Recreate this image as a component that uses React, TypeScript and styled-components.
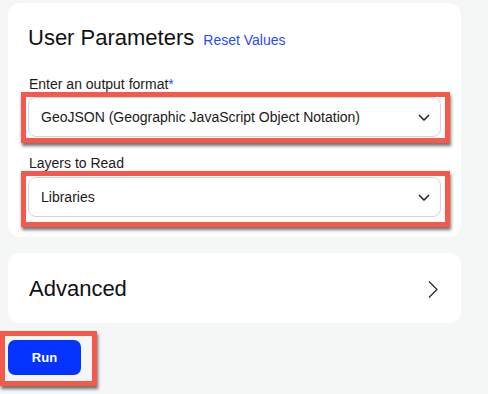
import React from 'react';
import styled, { createGlobalStyle } from 'styled-components';

const GlobalStyle = createGlobalStyle`
  html, body {
    margin: 0;
    padding: 0;
    background: #f4f7f5;
    font-family: 'Liberation Sans', Arial, sans-serif;
    color: #161616;
  }
`;

const Page = styled.div`
  display: flex;
  flex-direction: column;
  padding: 3px 27px 0 8px;
  min-height: 394px;
  box-sizing: border-box;
`;

const Card = styled.section`
  background: #ffffff;
  border-radius: 12px;
  padding: 22px 20px 10px 20px;
`;

const TitleRow = styled.div`
  display: flex;
  align-items: baseline;
  gap: 9px;
  height: 26px;
  line-height: 26px;
`;

const Title = styled.h2`
  margin: 0;
  font-size: 22px;
  font-weight: 400;
  color: #111;
`;

const ResetLink = styled.a`
  font-size: 14px;
  color: #1f4cff;
  text-decoration: none;
  cursor: pointer;
`;

const Label = styled.label<{ $top: number }>`
  display: block;
  margin-top: ${(p) => p.$top}px;
  font-size: 14px;
  line-height: 16px;
  height: 16px;
  padding-left: 1px;
  color: #1a1a1a;
`;

const Required = styled.span`
  color: #1f4cff;
`;

// red annotation frame drawn around the highlighted controls
const Highlight = styled.div<{ $pad: string; $margin: string }>`
  border: 5px solid #f4594b;
  padding: ${(p) => p.$pad};
  margin: ${(p) => p.$margin};
  box-shadow: 1px 3px 3px rgba(0, 0, 0, 0.55);
`;

const Select = styled.div`
  height: 40px;
  box-sizing: border-box;
  border: 1px solid #d3d6d4;
  border-radius: 8px;
  background: #fff;
  display: flex;
  align-items: center;
  justify-content: space-between;
  padding: 0 10px 0 12px;
  font-size: 14px;
  color: #1a1a1a;
`;

const AdvancedCard = styled.section`
  margin-top: 16px;
  height: 70px;
  background: #ffffff;
  border-radius: 12px;
  display: flex;
  align-items: center;
  justify-content: space-between;
  padding: 2px 23px 0 21px;
  box-sizing: border-box;
`;

const AdvancedTitle = styled.span`
  font-size: 22px;
  color: #111;
`;

const RunFrame = styled(Highlight)`
  align-self: flex-start;
`;

const RunButton = styled.button`
  display: block;
  width: 73px;
  height: 35px;
  border: none;
  border-radius: 7px;
  background: #0433ff;
  color: #fff;
  font-family: 'Liberation Sans', Arial, sans-serif;
  font-size: 13px;
  font-weight: 700;
  cursor: pointer;
`;

function ChevronDown() {
  return (
    <svg width='12' height='7' viewBox='0 0 12 7' fill='none'>
      <polyline points='1,1 6,6 11,1' stroke='#222' strokeWidth='1.5' />
    </svg>
  );
}

function ChevronRight() {
  return (
    <svg width='10' height='17' viewBox='0 0 10 17' fill='none'>
      <polyline points='1,0.5 9,8.5 1,16.5' stroke='#222' strokeWidth='1.2' />
    </svg>
  );
}

export default function App() {
  return (
    <>
      <GlobalStyle />
      <Page>
        <Card>
          <TitleRow>
            <Title>User Parameters</Title>
            <ResetLink>Reset Values</ResetLink>
          </TitleRow>

          <Label $top={25}>
            Enter an output format<Required>*</Required>
          </Label>
          <Highlight $pad='0 4px 1px 2px' $margin='0 -9px 0 -7px'>
            <Select>
              GeoJSON (Geographic JavaScript Object Notation)
              <ChevronDown />
            </Select>
          </Highlight>

          <Label $top={12}>Layers to Read</Label>
          <Highlight $pad='1px 4px 5px 2px' $margin='0 -9px 0 -7px'>
            <Select>
              Libraries
              <ChevronDown />
            </Select>
          </Highlight>
        </Card>

        <AdvancedCard>
          <AdvancedTitle>Advanced</AdvancedTitle>
          <ChevronRight />
        </AdvancedCard>

        <RunFrame $pad='4px 11px 6px 3px' $margin='8px 0 0 -8px'>
          <RunButton>Run</RunButton>
        </RunFrame>
      </Page>
    </>
  );
}
